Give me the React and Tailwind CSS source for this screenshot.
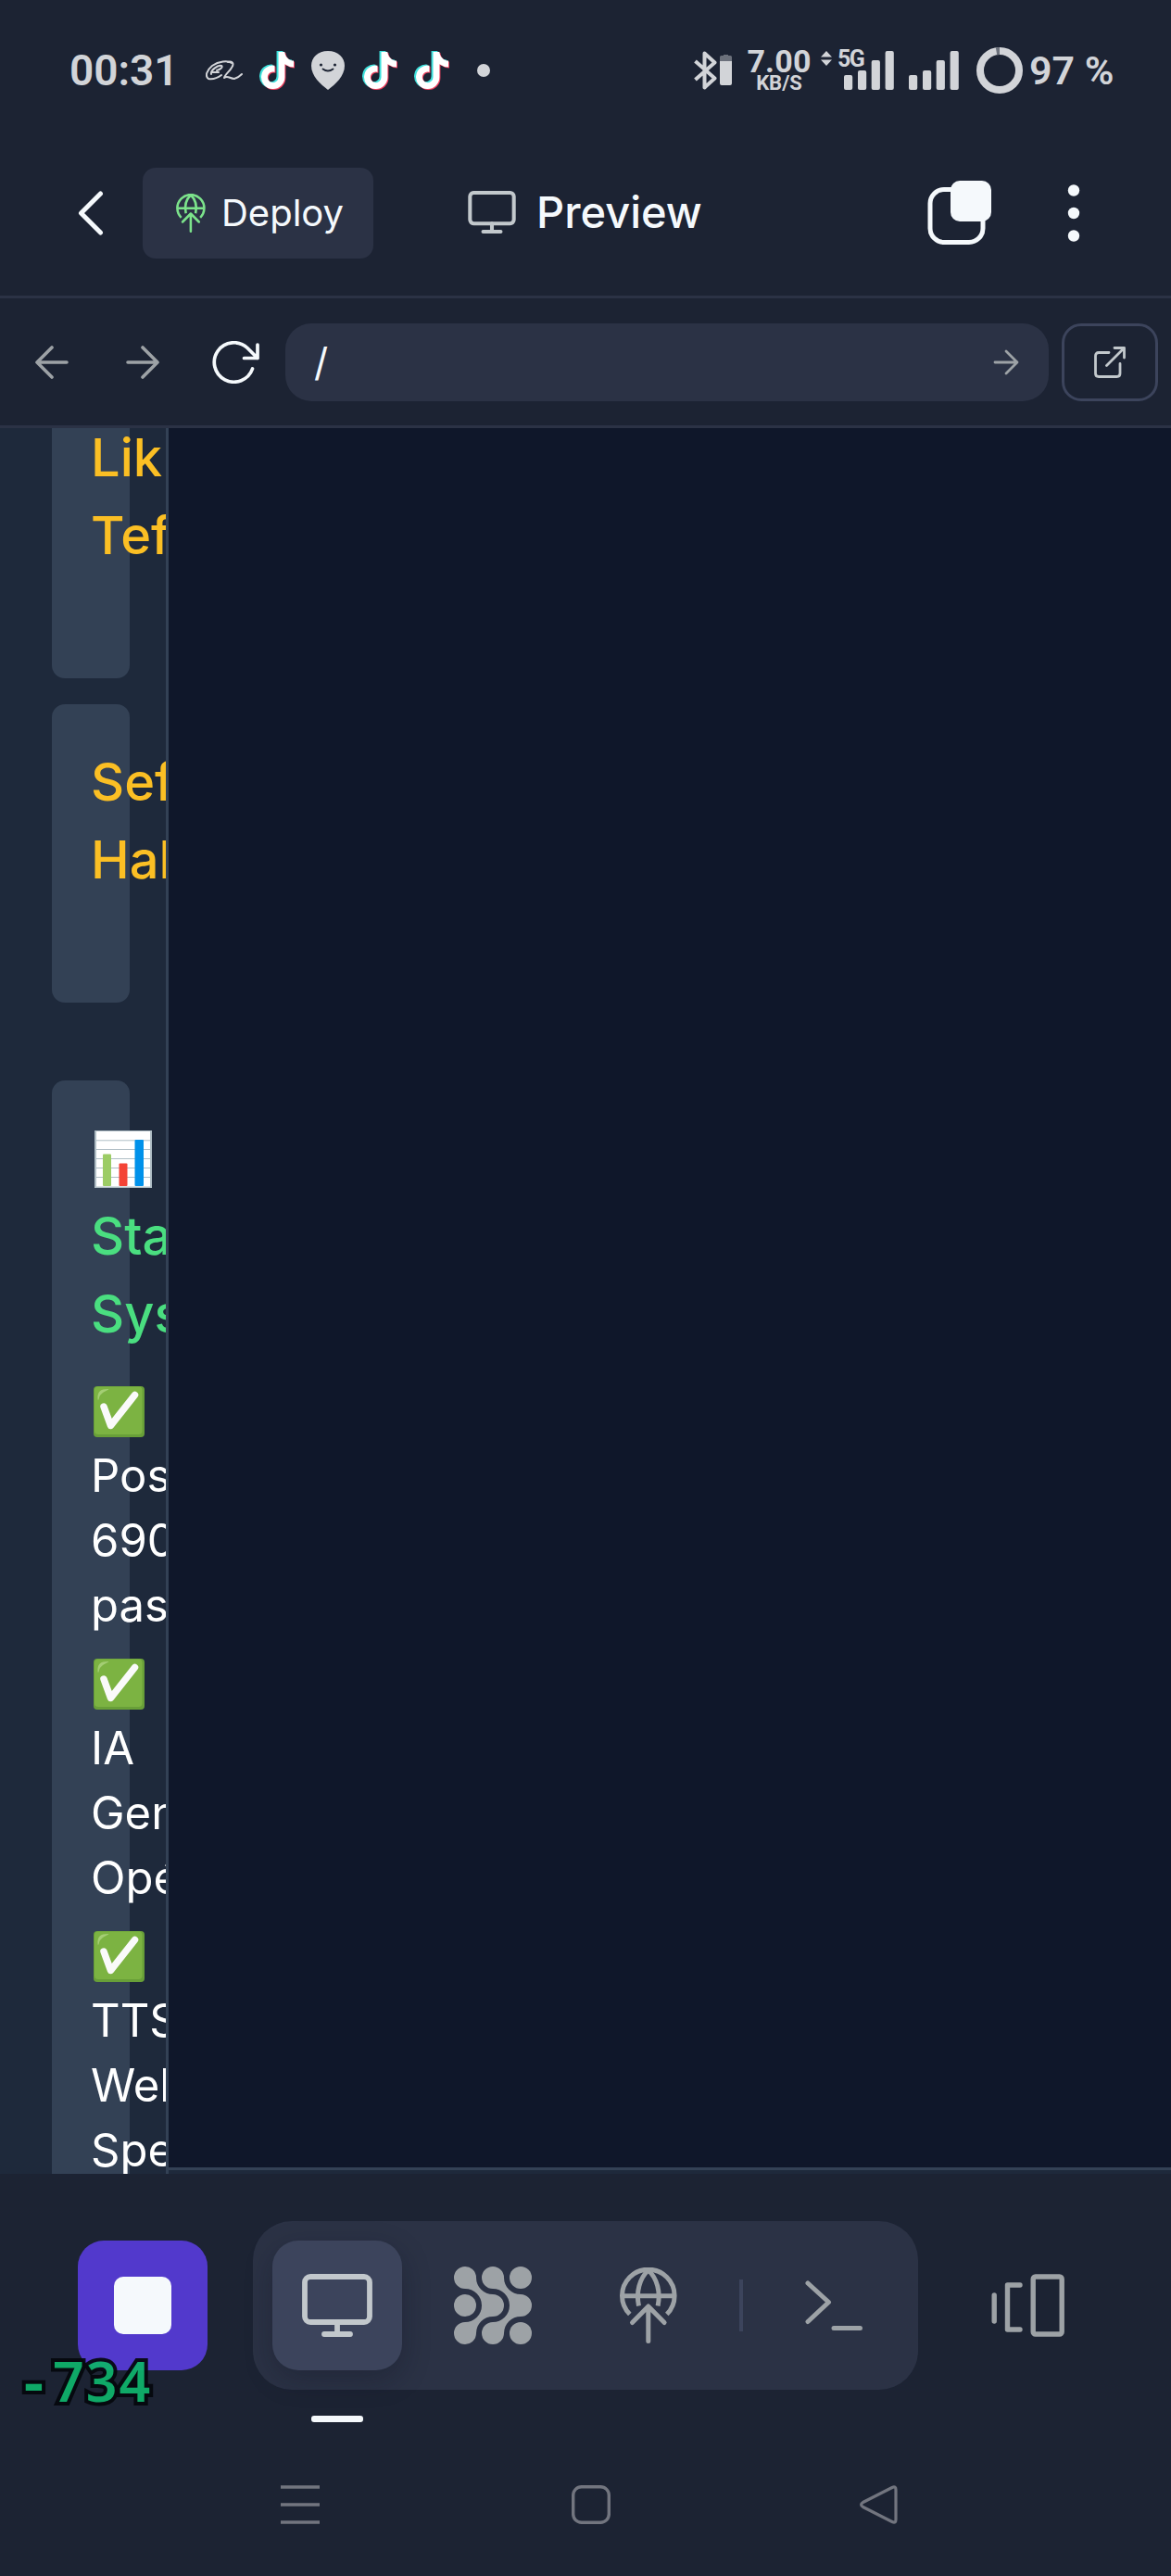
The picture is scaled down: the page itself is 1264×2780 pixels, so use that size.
import React from "react";
import { FaTiktok } from "react-icons/fa";

const stroke = { fill: "none", stroke: "currentColor", strokeLinecap: "round", strokeLinejoin: "round" };

function TikTok({ className }) {
  return (
    <div className={`relative h-[42px] w-[38px] shrink-0 ${className}`}>
      <FaTiktok className="absolute top-0 left-0 h-[40px] w-[35px] text-[#3fe0dc]" />
      <FaTiktok className="absolute top-[2px] left-[3px] h-[40px] w-[35px] text-[#f0415f]" />
      <FaTiktok className="absolute top-[1px] left-[1.5px] h-[40px] w-[35px] text-white" />
    </div>
  );
}

function DeployGlyph({ className }) {
  return (
    <svg viewBox="0 0 62 82" className={className} {...stroke} strokeWidth="5" strokeLinecap="butt">
      <path d="M10.8 50.5A28.3 28.3 0 1 1 50.8 50.5" />
      <path d="M4 30.7H58" />
      <path d="M30.8 3C21 12 17.5 27 20.5 41.500M30.8 3C40.600 12 44.100 27 41.100 41.500" />
      <path strokeLinecap="round" d="M13.5 59.500L30.800 42L48.100 59.500M30.800 43V79.500" />
    </svg>
  );
}

function Monitor({ className, sw }) {
  return (
    <svg viewBox="0 0 76 68" className={className} {...stroke} strokeWidth={sw}>
      <rect x="3" y="3" width="70" height="49" rx="6" />
      <path d="M38 52V65M24 65H52" />
    </svg>
  );
}

function Signal({ className }) {
  return (
    <svg viewBox="0 0 54 42" className={`h-[42px] w-[54px] shrink-0 ${className}`} fill="currentColor">
      <rect x="0" y="26" width="9.200" height="16" rx="2" />
      <rect x="15" y="21" width="9.200" height="21" rx="2" />
      <rect x="29.700" y="10" width="9.200" height="32" rx="2" />
      <rect x="44.600" y="0" width="9.200" height="42" rx="2" />
    </svg>
  );
}

function Check() {
  return (
    <svg viewBox="0 0 55 55" className="mt-[8px] mb-[7px] ml-[3px] block h-[55px] w-[55px]">
      <rect x="0" y="0" width="55" height="55" rx="4" fill="#689f38" />
      <rect x="1" y="0.500" width="51.500" height="51.500" rx="4" fill="#7cb342" />
      <path d="M4.500 14C4 6 7 3 16 3C18 4 7 6 6 13C5.500 15 4.600 15.500 4.500 14Z" fill="#aed581" opacity=".8" />
      <path d="M11 22L18.500 42.500L44.500 9.500" fill="none" stroke="#fafafa" strokeWidth="7.500" strokeLinecap="round" strokeLinejoin="round" />
    </svg>
  );
}

function ChartEmoji() {
  return (
    <svg viewBox="0 0 62 62" className="mt-[12px] mb-[10px] ml-[4px] block h-[62px] w-[62px]">
      <rect width="62" height="62" fill="#b0bec5" />
      <rect x="2" y="1" width="58" height="59.500" fill="#fff" />
      <path d="M2 10.800H60M2 20.500H60M2 30.500H60M2 40.500H60M2 50.500H60" stroke="#b0bec5" />
      <rect x="9" y="25.500" width="9" height="34.500" rx="1" fill="#9ccc65" />
      <rect x="26.500" y="35.500" width="9" height="24.500" rx="1" fill="#f44336" />
      <rect x="43.500" y="10" width="9.500" height="50" rx="1" fill="#0091ea" />
    </svg>
  );
}

function StatusBar() {
  return (
    <div className="flex h-[152px] shrink-0 items-center text-[#d2d4d8] font-[Roboto,sans-serif]">
      <span className="ml-[75px] w-[147px] text-[46px] leading-none font-semibold whitespace-nowrap">00:31</span>
      <svg viewBox="0 0 40 22" className="h-[22px] w-[40px] shrink-0" {...stroke} strokeWidth="2">
        <path d="M12 11C16 10 19 7 17 6C13 5 5 11 6 15M7 13H14M28 3C24 0 14 1 7 6C1 11 -1 17 3 20C8 21 13 19 17 16" />
        <path d="M24 2C29 0 31 4 28 8C26 12 21 15 20 19C24 16 26 20 31 20C34 19 37 17 39 15" />
      </svg>
      <TikTok className="ml-[18px]" />
      <svg viewBox="0 0 36 42" className="ml-[18px] h-[42px] w-[36px] shrink-0">
        <path d="M18 0C7 0 0 7 0 16C0 27 10 36 18 42C26 36 36 27 36 16C36 7 29 0 18 0Z" fill="#d2d4d8" />
        <circle cx="10.500" cy="15" r="1.600" fill="#1c2333" />
        <circle cx="25.500" cy="15" r="1.600" fill="#1c2333" />
        <path d="M12.500 19.500Q18 23.500 23.500 19.500" fill="none" stroke="#1c2333" strokeWidth="1.800" strokeLinecap="round" />
      </svg>
      <TikTok className="ml-[19px]" />
      <TikTok className="ml-[18px]" />
      <span className="ml-[30px] size-[14px] shrink-0 rounded-full bg-[#d2d4d8]" />
      <svg viewBox="0 0 42 42" className="ml-[220px] h-[42px] w-[42px] shrink-0">
        <path d="M1.500 11L22.500 29.500L11.500 39.500V2.500L22.500 12.500L1.500 31" fill="none" stroke="#d2d4d8" strokeWidth="4" strokeLinejoin="round" />
        <path d="M28 11V6.500Q28 5 29.500 5H32V4H37V5H39.500Q41 5 41 6.500V11Z" fill="#6b707b" />
        <path d="M28 11H41V35Q41 37 39 37H30Q28 37 28 35Z" fill="#d2d4d8" />
      </svg>
      <div className="ml-[15px] flex h-[48px] w-[70px] shrink-0 flex-col items-center">
        <span className="text-[34px] leading-[28px] font-bold tracking-[0.2px]">7.00</span>
        <span className="text-[22px] leading-[20px] font-bold">KB/S</span>
      </div>
      <div className="relative ml-[35px] shrink-0">
        <Signal className="block" />
        <span className="absolute top-[-3px] -left-[7px] text-[25px] leading-[24px] font-bold tracking-[-1.500px]">5G</span>
        <svg viewBox="0 0 12 16" className="absolute top-0 -left-[25px] h-[16px] w-[12px]" fill="currentColor">
          <path d="M6 0L12 6.500H0ZM6 16L12 9.500H0Z" />
        </svg>
      </div>
      <Signal className="ml-[16px]" />
      <svg viewBox="0 0 50 50" className="ml-[19px] h-[50px] w-[50px] shrink-0" fill="none" strokeWidth="8">
        <circle cx="25" cy="25" r="21" stroke="#d2d4d8" />
        <path d="M21.500 4.300A21 21 0 0 1 25 4" stroke="#6b707b" />
      </svg>
      <span className="ml-[7px] text-[43px] leading-none font-semibold whitespace-nowrap">97 %</span>
    </div>
  );
}

function Header() {
  return (
    <div className="flex h-[167px] shrink-0 items-start pt-[29px] font-[Inter,sans-serif] text-[#f5f9fc]">
      <svg viewBox="0 0 28 48" className="mt-[25px] ml-[84px] h-[48px] w-[28px] shrink-0" {...stroke} strokeWidth="5">
        <path d="M24.500 3L3.500 24L24.500 45" />
      </svg>
      <div className="ml-[42px] flex h-[98px] w-[249px] shrink-0 items-center rounded-[14px] bg-[#2b3245]">
        <DeployGlyph className="ml-[36px] h-[42px] w-[32px] text-[#7ce38b]" />
        <span className="ml-[17px] text-[40px] leading-none">Deploy</span>
      </div>
      <Monitor sw="6" className="mt-[25px] ml-[102px] h-[46px] w-[52px] shrink-0 text-[#c2c8cc]" />
      <span className="mt-[15px] ml-[22px] w-[190px] shrink-0 text-[47px] leading-[66px] font-medium">Preview</span>
      <svg viewBox="0 0 70 70" className="mt-[14px] ml-[232px] h-[70px] w-[70px] shrink-0">
        <rect x="3" y="9.500" width="57" height="57" rx="15" fill="none" stroke="currentColor" strokeWidth="5" />
        <rect x="25" y="0" width="44" height="44" rx="10" fill="currentColor" />
      </svg>
      <svg viewBox="0 0 14 64" className="mt-[17px] ml-[81px] h-[64px] w-[14px] shrink-0" fill="currentColor">
        <circle cx="7" cy="7.500" r="6.200" />
        <circle cx="7" cy="32" r="6.200" />
        <circle cx="7" cy="56.500" r="6.200" />
      </svg>
    </div>
  );
}

function AddressBar() {
  return (
    <div className="flex h-[143px] shrink-0 items-center border-y-[3px] border-[#2b3245] font-[Inter,sans-serif] text-[#9da2a6]">
      <svg viewBox="0 0 36 36" className="ml-[38px] size-[36px] shrink-0" {...stroke} strokeWidth="3.600">
        <path d="M34 18H2M18 2L2 18L18 34" />
      </svg>
      <svg viewBox="0 0 36 36" className="ml-[62px] size-[36px] shrink-0" {...stroke} strokeWidth="3.600">
        <path d="M2 18H34M18 2L34 18L18 34" />
      </svg>
      <svg viewBox="0 0 51 46" className="ml-[57px] h-[46px] w-[51px] shrink-0 text-[#f5f9fc]" {...stroke} strokeWidth="3.700">
        <path d="M43.500 30A21.200 21.200 0 1 1 38 7.500L49 18.500M49 4V18.500H34.500" />
      </svg>
      <div className="ml-[28px] flex h-[84px] w-[824px] shrink-0 items-center justify-between rounded-[28px] bg-[#2b3245] pr-[32px] pl-[31px]">
        <span className="text-[42px] leading-none text-[#f5f9fc]">/</span>
        <svg viewBox="0 0 28 28" className="size-[28px]" {...stroke} strokeWidth="2.800">
          <path d="M2 14H26M14 2L26 14L14 26" />
        </svg>
      </div>
      <div className="ml-[14px] flex h-[84px] w-[104px] shrink-0 items-center justify-center rounded-[21px] border-[3px] border-[#3c445c] text-[#c2c8cc]">
        <svg viewBox="0 0 34 34" className="size-[34px]" {...stroke} strokeWidth="2.800">
          <path d="M16 6.500H5Q1.500 6.500 1.500 10V29Q1.500 32.500 5 32.500H24.500Q28 32.500 28 29V18.500" />
          <path d="M22 1.500H32.500V12M32.500 1.500L13.500 20.500" />
        </svg>
      </div>
    </div>
  );
}

const statusItems = [
  ["Pos", "690", "pas"],
  ["IA", "Gen", "Opé"],
  ["TTS", "Web", "Spe"],
];

function Preview() {
  return (
    <div className="flex h-[1884px] shrink-0 overflow-hidden bg-[#1e293b] font-[Inter,sans-serif]">
      <div className="flex w-[182px] shrink-0 flex-col overflow-hidden border-r-[3px] border-[#334155] pl-[56px]">
        <div className="h-[270px] w-[84px] shrink-0 rounded-b-[14px] bg-[#334155] pl-[42px] text-[56px] leading-[84px] font-medium text-[#fbbf24]">
          <p className="mt-[-10px]">Lik</p>
          <p>Tef</p>
        </div>
        <div className="mt-[28px] h-[322px] w-[84px] shrink-0 rounded-[14px] bg-[#334155] pt-[42px] pl-[42px] text-[56px] leading-[84px] font-medium text-[#fbbf24]">
          <p>Sef</p>
          <p>Hal</p>
        </div>
        <div className="mt-[84px] h-[1300px] w-[84px] shrink-0 rounded-[14px] bg-[#334155] pt-[42px] pl-[42px]">
          <div className="text-[56px] leading-[84px] font-medium text-[#4ade80]">
            <ChartEmoji />
            <p>Sta</p>
            <p>Sys</p>
          </div>
          <div className="mt-[28px] flex flex-col gap-[14px] text-[49px] leading-[70px] text-white">
            {statusItems.map((lines) => (
              <div key={lines[0]}>
                <Check />
                {lines.map((l) => (
                  <p key={l}>{l}</p>
                ))}
              </div>
            ))}
          </div>
        </div>
      </div>
      <div className="mb-[4px] flex-1 border-b-[3px] border-[#334155] bg-[#0f172a]" />
    </div>
  );
}

function Toolbar() {
  return (
    <div className="flex h-[233px] shrink-0 items-center text-[#9da2a6]">
      <div className="relative ml-[84px] flex size-[140px] shrink-0 items-center justify-center rounded-[28px] bg-[#5239cc]">
        <div className="size-[62px] rounded-[10px] bg-[#f5f9fc]" />
        <div className="absolute top-[115px] left-[-68px] flex font-['Noto_Sans',sans-serif] text-[59px] leading-[72px] font-semibold text-[#0fb46b] opacity-93 [paint-order:stroke_fill] [-webkit-text-stroke:8px_#05080d]">
          <span className="w-[41px] text-center text-[68px]">-</span>
          <span className="tracking-[2px]">734</span>
        </div>
      </div>
      <div className="ml-[49px] flex h-[182px] w-[718px] shrink-0 items-center rounded-[42px] bg-[#2b3245]">
        <div className="relative ml-[21px] flex size-[140px] items-center justify-center rounded-[28px] bg-[#3c445c] shadow-[0_10px_30px_rgba(10,14,30,0.28)]">
          <Monitor sw="5.800" className="h-[68px] w-[76px] text-[#c2c8cc]" />
          <div className="absolute top-[189px] left-[42px] h-[7px] w-[56px] rounded-[3px] bg-[#f5f9fc]" />
        </div>
        <svg viewBox="0 0 84 84" className="ml-[56px] size-[84px]" fill="currentColor">
          <path d="M24 12A12 12 0 1 0 12 24A18 18 0 0 1 30 42A18 18 0 0 1 12 60A12 12 0 1 0 24 72A18 18 0 0 1 42 54A12 12 0 0 0 42 30A18 18 0 0 1 24 12Z" />
          <path d="M54 12A12 12 0 1 0 42 24A18 18 0 0 1 60 42A18 18 0 0 1 42 60A12 12 0 1 0 54 72A18 18 0 0 1 72 54A12 12 0 0 0 72 30A18 18 0 0 1 54 12Z" />
          <circle cx="12" cy="42" r="12" />
          <circle cx="72" cy="12" r="12" />
          <circle cx="72" cy="72" r="12" />
        </svg>
        <DeployGlyph className="ml-[95px] h-[82px] w-[62px]" />
        <div className="ml-[67px] h-[56px] w-[4px] bg-[#3c445c]" />
        <svg viewBox="0 0 62 54" className="ml-[67px] h-[54px] w-[62px]" {...stroke} strokeWidth="5">
          <path d="M3 3L25.500 23.500L3 44.500M31 51.500H59.500" />
        </svg>
      </div>
      <svg viewBox="0 0 79 68" className="ml-[79px] h-[68px] w-[79px] shrink-0" {...stroke} strokeWidth="5.400">
        <path d="M3.200 23V51M31 12H17.500V60H31" />
        <rect x="45.200" y="3" width="31" height="62" rx="2.500" />
      </svg>
    </div>
  );
}

function SystemNav() {
  return (
    <div className="flex shrink-0 items-center pt-[78px] text-[#72757f]">
      <svg viewBox="0 0 42 42" className="ml-[303px] size-[42px]" fill="none" stroke="currentColor" strokeWidth="3.600">
        <path d="M0 2H42M0 21H42M0 40H42" />
      </svg>
      <svg viewBox="0 0 42 42" className="ml-[272px] size-[42px]" fill="none" stroke="currentColor" strokeWidth="3.400">
        <rect x="1.700" y="1.700" width="38.600" height="38.600" rx="9" />
      </svg>
      <svg viewBox="0 0 42 42" className="ml-[269px] size-[42px]" {...stroke} strokeWidth="3.200">
        <path d="M35 2.500Q39 0.500 39 5V37Q39 41.500 35 39.500L3.500 23.500Q-0.300 21 3.500 18.500Z" />
      </svg>
    </div>
  );
}

export default function App() {
  return (
    <div className="flex h-[2780px] w-[1264px] flex-col overflow-hidden bg-[#1c2333]">
      <StatusBar />
      <Header />
      <AddressBar />
      <Preview />
      <div className="pt-[25px]">
        <Toolbar />
      </div>
      <SystemNav />
    </div>
  );
}
